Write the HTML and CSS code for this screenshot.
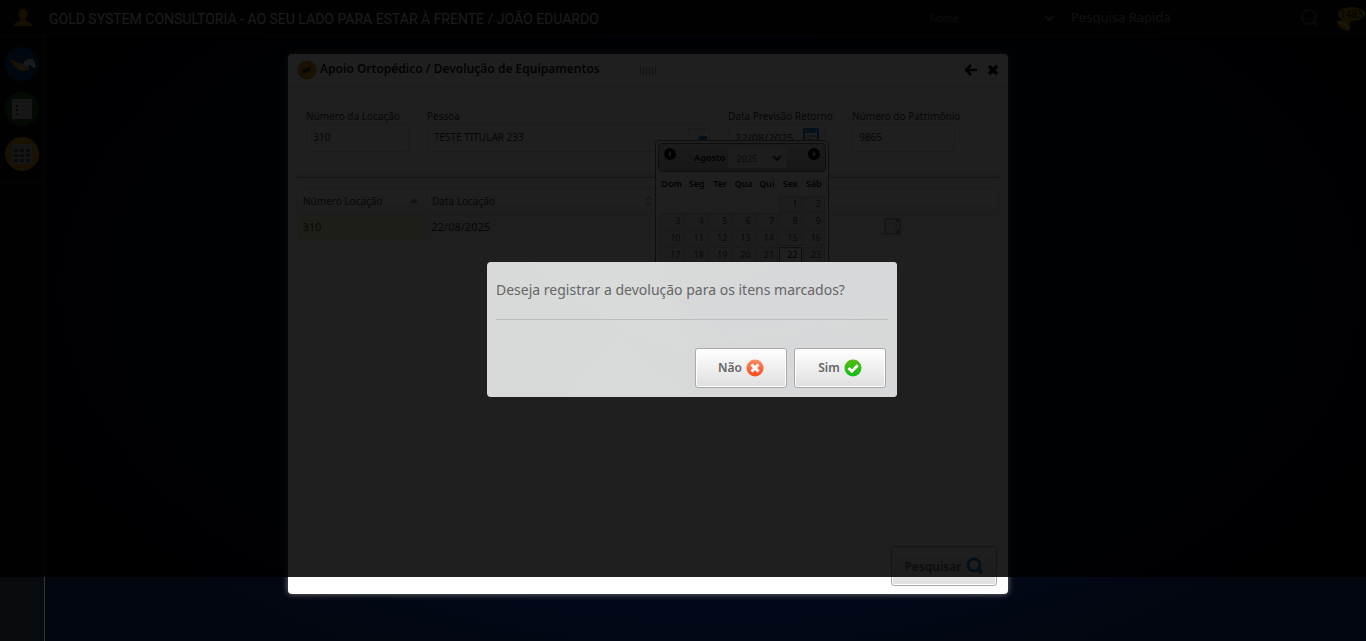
FILE: index.html
```html
<!DOCTYPE html>
<html lang="pt-BR">
<head>
<meta charset="utf-8">
<title>Devolução de Equipamentos</title>
<link rel="stylesheet" href="styles.css">
</head>
<body>
<div class="page">
  <header class="topbar">
    <a class="user" href="#" aria-label="Usuário">
      <svg width="18" height="20" viewBox="0 0 18 20"><path fill="#a87f00" d="M9 1c3 0 4.700 2 4.500 5-.2 2.500-1.200 4-2 5 0 1.500.5 2 2.500 2.700C16.500 14.500 18 15.500 18 18H0c0-2.500 1.500-3.500 4-4.300C6 13 6.500 12.500 6.500 11c-.8-1-1.800-2.500-2-5C4.300 3 6 1 9 1z"/></svg>
    </a>
    <h1 class="company">GOLD SYSTEM CONSULTORIA - AO SEU LADO PARA ESTAR À FRENTE / JOÃO EDUARDO</h1>
    <form class="search">
      <span class="drop"><select class="kind" aria-label="Tipo de pesquisa"><option>Nome</option></select>
        <svg class="chev" width="10" height="8" viewBox="0 0 10 8"><path d="M1 2l4 4 4-4" fill="none" stroke="#777" stroke-width="2"/></svg></span>
      <input class="query" type="text" placeholder="Pesquisa Rapida" aria-label="Pesquisa Rapida">
      <button class="plain" type="button" aria-label="Buscar"><svg width="20" height="20" viewBox="0 0 20 20"><g fill="none" stroke="#484848" stroke-width="2"><circle cx="9" cy="9" r="7"/><path d="M14 14l4 4" stroke-width="3"/></g></svg></button>
    </form>
    <a class="bell" href="#" aria-label="Notificações">
      <svg width="18" height="18" viewBox="0 0 18 18"><path fill="#b87a00" d="M1 8c3 0 6-1 7-4l7 4c-2 2-1 4-1 8-1 3-4 2-7 0-4-2-6-4-6-8z"/><path d="M2 9c4 0 8 3 11 6" stroke="#d8b030" stroke-width="2" fill="none"/></svg>
      <span class="badge">1483</span>
    </a>
  </header>

  <nav class="side">
    <div class="apps">
      <a href="#" class="round blue" aria-label="Gold System"><svg width="34" height="34" viewBox="0 0 34 34"><path fill="#d09a1c" d="M5 12c4 3 8 3 12 5 2 1 4 4 7 6-4 1-9 1-12-1l2-.5c-3-.5-5-1.500-6-3.500h2c-3-1.500-5-3-5-6z"/><path fill="#c8d0dc" d="M18 18c1-4 4-7 8-6l1-1 1 2c2 2 2 4 3 7l-2 1-4-3c-2 0-2 2-1 5-1-1-3-4-6-5z"/></svg></a>
      <a href="#" class="round green" aria-label="Cadastros"><svg width="34" height="34" viewBox="0 0 34 34"><rect x="7" y="7" width="20" height="20" fill="#bbb"/><rect x="8" y="9" width="18" height="1" fill="#999"/><path fill="#333" d="M11 13h2v2h-2zM11 17h2v2h-2zM11 21h2v2h-2z"/><path fill="#999" d="M15 14h9v1h-9zM15 18h9v1h-9zM15 22h7v1h-7z"/></svg></a>
      <a href="#" class="round gold" aria-label="Agenda"><svg width="34" height="34" viewBox="0 0 34 34"><rect x="7" y="7" width="20" height="20" fill="#aaa"/><path fill="#555" d="M9 12h4v3H9zM15 12h4v3h-4zM21 12h4v3h-4zM9 17h4v3H9zM15 17h4v3h-4zM21 17h4v3h-4zM9 22h4v3H9zM15 22h4v3h-4zM21 22h4v3h-4z"/></svg></a>
    </div>
  </nav>

  <main class="window">
    <div class="titlebar">
      <svg width="20" height="20" viewBox="0 0 20 20"><circle cx="10" cy="10" r="9.500" fill="#d08a14"/><path fill="#333" d="M5 8l2 1 3-1 4-1-1 3 1 3-2-2-3 1-2 1-2-1 1-2z"/></svg>
      <h2>Apoio Ortopédico / Devolução de Equipamentos</h2>
      <span class="grip"></span>
      <button class="plain" type="button" aria-label="Voltar"><svg width="14" height="14" viewBox="0 0 14 14"><path d="M13 7H3M7 2L2 7l5 5" fill="none" stroke="#000" stroke-width="2.500"/></svg></button>
      <button class="plain" type="button" aria-label="Fechar"><svg width="12" height="12" viewBox="0 0 12 12"><path d="M2 2l8 8M10 2l-8 8" stroke="#000" stroke-width="3.500"/></svg></button>
    </div>

    <form class="filters">
      <label class="field short">Número da Locação<input type="text" value="310"></label>
      <label class="field person">Pessoa<span class="with-icon"><input type="text" value="TESTE TITULAR 233"><svg width="20" height="18" viewBox="0 0 20 18"><path fill="#ddd" d="M0 0h19v2H0zM0 2h1v14H0zM10 2h1v12h-1z"/><rect x="11" y="8" width="8" height="8" rx="1" fill="#1474c4"/></svg></span></label>
      <label class="field date">Data Previsão Retorno<span class="with-icon"><input type="text" value="22/08/2025"><svg width="16" height="18" viewBox="0 0 16 18"><rect width="16" height="17" rx="2" fill="#2487c9"/><rect x="2" y="5" width="12" height="11" fill="#fff"/><path d="M3 8h10M3 11h7" stroke="#888"/><path d="M3 2v2M13 2v2" stroke="#fff"/></svg></span></label>
      <label class="field short">Número do Patrimônio<input type="text" value="9865"></label>
    </form>
    <div class="divider"></div>

    <table class="grid">
      <colgroup><col class="c1"><col class="c2"><col class="c3"><col></colgroup>
      <thead><tr>
        <th><span>Número Locação<svg width="8" height="5" viewBox="0 0 8 5"><path d="M4 0l4 5H0z" fill="#888"/></svg></span></th>
        <th><span>Data Locação<svg width="8" height="10" viewBox="0 0 8 10"><path d="M1 4l3-3 3 3M1 6l3 3 3-3" fill="none" stroke="#888"/></svg></span></th>
        <th></th><th></th>
      </tr></thead>
      <tbody><tr>
        <td class="mark">310</td><td>22/08/2025</td><td></td>
        <td class="center"><svg width="18" height="18" viewBox="0 0 18 18"><rect x="1" y="2" width="15" height="15" fill="#eee" stroke="#777"/><path d="M4 6h7M4 9h7M4 12h7" stroke="#ccc"/><path d="M12 2v15" stroke="#999"/><path d="M14 3v2M14 13v3" stroke="#c86b28" stroke-width="2"/></svg></td>
      </tr></tbody>
    </table>

    <div class="actions"><button class="btn wide" type="button">Pesquisar<svg width="18" height="18" viewBox="0 0 18 18"><circle cx="8" cy="8" r="6" fill="none" stroke="#1687c9" stroke-width="3"/><path d="M12 12l4 4" stroke="#1687c9" stroke-width="4"/></svg></button></div>
  </main>

  <section class="picker">
    <div class="month">
      <button class="plain" type="button" aria-label="Anterior"><svg width="12" height="12" viewBox="0 0 12 12"><circle cx="6" cy="6" r="6" fill="#000"/><path d="M7 3v6L4 6z" fill="#ddd"/></svg></button>
      <strong>Agosto</strong>
      <span class="drop"><select aria-label="Ano"><option>2025</option></select><svg class="chev" width="10" height="8" viewBox="0 0 10 8"><path d="M1 2l4 4 4-4" fill="none" stroke="#333" stroke-width="2"/></svg></span>
      <button class="plain" type="button" aria-label="Próximo"><svg width="12" height="12" viewBox="0 0 12 12"><circle cx="6" cy="6" r="6" fill="#000"/><path d="M5 3v6l3-3z" fill="#ddd"/></svg></button>
    </div>
    <table>
      <thead><tr><th>Dom</th><th>Seg</th><th>Ter</th><th>Qua</th><th>Qui</th><th>Sex</th><th>Sáb</th></tr></thead>
      <tbody>
        <tr><td colspan="5"></td><td><a href="#">1</a></td><td><a href="#">2</a></td></tr>
        <tr><td><a href="#">3</a></td><td><a href="#">4</a></td><td><a href="#">5</a></td><td><a href="#">6</a></td><td><a href="#">7</a></td><td><a href="#">8</a></td><td><a href="#">9</a></td></tr>
        <tr><td><a href="#">10</a></td><td><a href="#">11</a></td><td><a href="#">12</a></td><td><a href="#">13</a></td><td><a href="#">14</a></td><td><a href="#">15</a></td><td><a href="#">16</a></td></tr>
        <tr><td><a href="#">17</a></td><td><a href="#">18</a></td><td><a href="#">19</a></td><td><a href="#">20</a></td><td><a href="#">21</a></td><td><a href="#" class="today">22</a></td><td><a href="#">23</a></td></tr>
      </tbody>
    </table>
  </section>

  <div class="shade"></div>

  <div class="dialog" role="dialog" aria-labelledby="question">
    <svg class="facets" viewBox="0 0 410 135" preserveAspectRatio="none" aria-hidden="true"><path d="M0 0h170l30 90-60-20L40 0z" fill="#d9dbda"/><path d="M190 40L290 0h120v50L230 75z" fill="#d6d8da"/><path d="M410 50v40l-80-30-130 75v-50z" fill="#d7d9d8"/><path d="M410 90l-80-30-130 75h210z" fill="#d6d8d9"/><path d="M130 75l70 60H80z" fill="#d9dada"/></svg>
    <p id="question">Deseja registrar a devolução para os itens marcados?</p>
    <div class="choices">
      <button class="btn" type="button">Não<svg width="18" height="18" viewBox="0 0 18 18"><defs><linearGradient id="red" x2="0" y2="1"><stop stop-color="#ff8a62"/><stop offset="1" stop-color="#f84c18"/></linearGradient></defs><circle cx="9" cy="9" r="8.500" fill="url(#red)"/><path d="M5.500 5.500l7 7M12.500 5.500l-7 7" stroke="#fff" stroke-width="3"/></svg></button>
      <button class="btn" type="button">Sim<svg width="18" height="18" viewBox="0 0 18 18"><defs><linearGradient id="grn" x2="0" y2="1"><stop stop-color="#52bd10"/><stop offset="1" stop-color="#12bd18"/></linearGradient></defs><circle cx="9" cy="9" r="8.500" fill="url(#grn)"/><path d="M4.500 9l3.300 3.300 6-6" fill="none" stroke="#fff" stroke-width="2.800"/></svg></button>
    </div>
  </div>
</div>
</body>
</html>
```
FILE: styles.css
```css
* { box-sizing: border-box; }
body {
  margin: 0;
  background: #020612;
  font-family: "Noto Sans", "Open Sans", sans-serif;
  font-size: 10px;
  color: #444;
}
h1, h2, p { margin: 0; }
svg { display: block; flex: none; }
a { color: inherit; text-decoration: none; }
input, select, button { font: inherit; color: inherit; }
.page {
  position: relative;
  display: grid;
  grid-template: 36px 1fr / 45px 1fr;
  min-height: 100vh;
  overflow: hidden;
  background: radial-gradient(ellipse 720px 420px at 52% 45%, #04123a, #030a20 60%, #02060f 100%);
}
.plain { border: 0; padding: 0; background: none; }

.topbar {
  grid-column: 1 / 3;
  display: flex;
  align-items: center;
  background: #080b0d;
  border-bottom: 1px solid #2c2c2c;
}
.user { display: flex; justify-content: center; width: 45px; }
.company { flex: 1; padding: 2px 0 0 4px; font-family: Roboto, "Noto Sans", sans-serif; font-size: 14px; font-weight: 400; color: #ddd; white-space: nowrap; }
.search { display: flex; align-items: center; width: 390px; color: #666; }
.drop { position: relative; display: flex; align-items: center; }
.drop select { width: 100%; appearance: none; border: 0; background: none; }
.chev { position: absolute; right: 8px; pointer-events: none; }
.search .drop { width: 134px; }
.search .chev { right: 10px; }
.search .kind { padding: 0; }
.query { flex: 1; min-width: 0; height: 32px; border: 0; padding: 0 7px 2px; background: none; font-size: 13px; }
.query::placeholder { color: #888; opacity: 1; }
.bell { position: relative; width: 46px; padding: 8px 0 0 16px; }
.badge {
  position: absolute;
  top: 2px;
  right: 1px;
  width: 27px;
  border-radius: 50%;
  background: #a8930f;
  color: #000;
  font-size: 10px;
  line-height: 14px;
  text-align: center;
}

.side { background: #080b0d; border-right: 1px solid #333; }
.apps {
  display: flex;
  flex-direction: column;
  align-items: center;
  gap: 11px;
  padding: 11px 0;
  border-bottom: 1px solid #2c2c2c;
}
.round { width: 34px; height: 34px; border-radius: 50%; }
.blue { background: #0d3a72; }
.green { background: #1c5020; }
.gold { background: #c88c0a; }

.window {
  position: absolute;
  left: 288px;
  top: 54px;
  display: flex;
  flex-direction: column;
  width: 720px;
  min-height: 540px;
  padding: 0 9px 8px;
  border-radius: 4px;
  background: #fff;
  box-shadow: 0 0 6px #777;
}
.titlebar {
  display: flex;
  align-items: center;
  gap: 9px;
  height: 33px;
  margin: 0 -9px;
  padding: 0 9px;
  border-bottom: 1px solid #ddd;
}
.titlebar h2 { width: 311px; margin-left: -6px; padding-bottom: 3px; font-size: 12px; font-weight: 600; color: #111; }
.grip { width: 17px; height: 9px; margin-right: auto; background: repeating-linear-gradient(90deg, #999 0 1px, transparent 1px 3px); }

.filters { display: flex; gap: 18px; padding: 22px 9px 0; }
.field { display: flex; flex-direction: column; line-height: 15px; color: #333; white-space: nowrap; }
.field input { width: 100%; height: 28px; border: 1px solid #ddd; border-radius: 3px; padding: 0 6px 2px; background: none; }
.short { width: 103px; }
.person { width: 283px; }
.date { width: 106px; }
.with-icon { display: flex; position: relative; }
.with-icon svg { position: absolute; right: 2px; top: 4px; }
.date .with-icon { width: 97px; }
.date .with-icon svg { right: 6px; }
.field.date input { font-size: 11px; }
.divider { height: 5px; margin: 21px 0 10px; background: #eee; border-bottom: 1px solid #bbb; }

.grid { width: 100%; border-collapse: collapse; table-layout: fixed; color: #333; }
.c1 { width: 129px; }
.c2 { width: 235px; }
.c3 { width: 125px; }
.grid th { height: 26px; padding: 0 8px 2px 5px; border: 1px solid #ddd; background: linear-gradient(#fff, #f2f2f2); font-weight: 400; }
.grid th:nth-child(n+3) { border-left: 0; border-right: 0; }
.grid th:last-child { border-right: 1px solid #ddd; }
.grid th span { display: flex; justify-content: space-between; align-items: center; }
.grid td { height: 25px; padding: 0 5px 2px; background: #f3f3f3; font-size: 11px; }
.grid .mark { background: #f3f3c4; }
.center svg { margin: 0 auto; }
.actions { display: flex; justify-content: flex-end; margin-top: auto; padding-right: 2px; }

.btn {
  display: flex;
  align-items: center;
  justify-content: center;
  gap: 4px;
  width: 92px;
  height: 40px;
  border: 1px solid #aaa;
  border-radius: 3px;
  box-shadow: inset 0 0 0 1px #fff;
  background: linear-gradient(#fff, #dfdfdf);
  color: #666;
  font-size: 12px;
  font-weight: 600;
}
.btn.wide { width: 106px; }

.picker {
  position: absolute;
  left: 655px;
  top: 140px;
  width: 174px;
  padding: 2px;
  border: 1px solid #777;
  border-radius: 4px;
  background: #fff;
  font-size: 9px;
}
.month {
  display: flex;
  justify-content: space-between;
  height: 29px;
  padding: 4px 5px;
  border: 1px solid #777;
  border-radius: 4px;
  background: linear-gradient(#ddd, #bbb);
  color: #000;
}
.month .plain { height: 12px; }
.month strong { margin: 3px -16px 0 0; font-weight: 600; }
.month .drop { width: 58px; height: 20px; margin-right: 4px; background: #eee; }
.month select { padding: 0 9px; color: #555; }
.month .chev { right: 4px; }
.picker table { width: 100%; border-spacing: 1px; }
.picker th { height: 22px; padding: 0 0 2px; color: #111; font-weight: 600; }
.picker td { padding: 0; }
.picker td a { display: block; height: 16px; padding: 0 3px; border: 1px solid #ccc; background: #eee; line-height: 14px; text-align: right; }
.picker .today { border-color: #777; background: #fff; color: #000; }

.shade { position: absolute; inset: 0 0 64px; background: rgba(0, 0, 0, 0.88); }

.dialog {
  position: absolute;
  left: 487px;
  top: 262px;
  width: 410px;
  padding: 0 9px 9px;
  border-radius: 4px;
  overflow: hidden;
  background: #d8dada;
}
.facets { position: absolute; inset: 0; width: 100%; height: 100%; }
.dialog p { position: relative; padding: 18px 0 19px; border-bottom: 1px solid #bbbebe; font-size: 14px; line-height: 20px; color: #666; }
.choices { position: relative; display: flex; justify-content: flex-end; gap: 7px; padding: 28px 2px 0 0; }
.choices .btn { padding-bottom: 2px; }
```
